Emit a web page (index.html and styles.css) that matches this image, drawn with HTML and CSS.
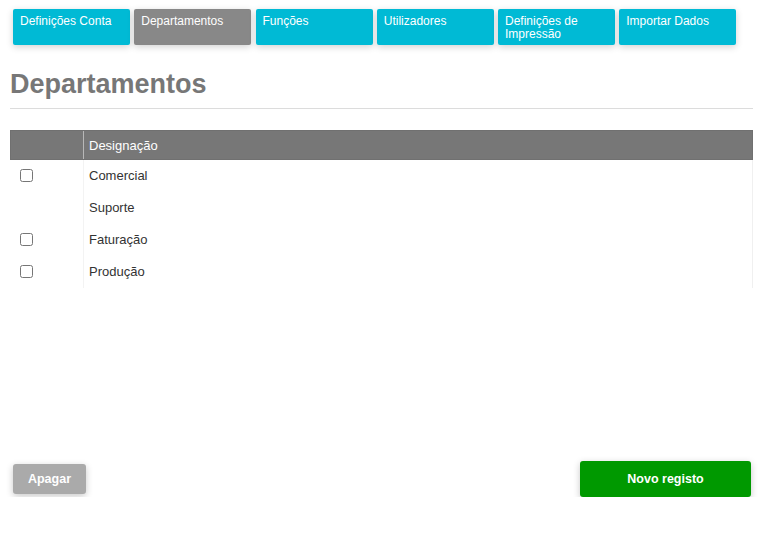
FILE: index.html
```html
<!DOCTYPE html>
<html lang="pt">
<head>
<meta charset="utf-8">
<title>Departamentos</title>
<link rel="stylesheet" href="styles.css">
</head>
<body>
<div class="page">
  <nav class="tabs">
    <a class="tab">Definições Conta</a>
    <a class="tab active">Departamentos</a>
    <a class="tab">Funções</a>
    <a class="tab">Utilizadores</a>
    <a class="tab">Definições de Impressão</a>
    <a class="tab">Importar Dados</a>
  </nav>

  <h1 class="title">Departamentos</h1>

  <table class="grid">
    <thead>
      <tr><th class="sel"></th><th class="name">Designação</th></tr>
    </thead>
    <tbody>
      <tr><td class="sel"><input type="checkbox"></td><td class="name">Comercial</td></tr>
      <tr><td class="sel"></td><td class="name">Suporte</td></tr>
      <tr><td class="sel"><input type="checkbox"></td><td class="name">Faturação</td></tr>
      <tr><td class="sel"><input type="checkbox"></td><td class="name">Produção</td></tr>
    </tbody>
  </table>

  <div class="actions">
    <button class="btn btn-delete">Apagar</button>
    <button class="btn btn-new">Novo registo</button>
  </div>
</div>
</body>
</html>
```

FILE: styles.css
```css
html, body {
  margin: 0;
  padding: 0;
  background: #fff;
}

.page {
  padding: 9px 10px 0 10px;
  font-family: "Liberation Sans", Arial, sans-serif;
}

.tabs {
  display: flex;
  gap: 4.25px;
  padding-left: 3px;
}

.tab {
  box-sizing: border-box;
  width: 117px;
  height: 36px;
  padding: 6px 7px 5px 7px;
  background: #00bad5;
  color: #fff;
  font-size: 12px;
  line-height: 13px;
  border-radius: 2px;
  box-shadow: 0 2px 7px rgba(0, 0, 0, 0.18);
}

.tab.active {
  background: #888;
}

.title {
  margin: 23px 0 0 0;
  padding-bottom: 8px;
  border-bottom: 1px solid #dcdcdc;
  font-size: 27px;
  line-height: 32px;
  font-weight: bold;
  color: #777;
}

.grid {
  margin-top: 21px;
  width: 100%;
  border-collapse: collapse;
  font-size: 13px;
}

.grid th {
  height: 28px;
  padding: 0 5px;
  background: #777;
  color: #fff;
  font-weight: normal;
  text-align: left;
  border-top: 1px solid #707070;
  border-bottom: 1px solid #707070;
}

.grid th.sel {
  width: 72px;
  padding: 0;
  border-left: 1px solid #707070;
}

.grid th.name {
  border-left: 1px solid #b8b8b8;
  border-right: 1px solid #707070;
}

.grid tbody tr {
  height: 32px;
}

.grid td {
  padding: 0 5px;
  color: #333;
}

.grid td.sel {
  padding: 9px 0 0 9px;
  vertical-align: top;
}

.grid td.name {
  border-left: 1px solid #f3f3f3;
  border-right: 1px solid #f0f0f0;
  vertical-align: middle;
}

.grid input[type="checkbox"] {
  width: 13px;
  height: 13px;
  margin: 0;
  display: block;
}

.actions {
  margin-top: 173px;
  display: flex;
  justify-content: space-between;
  align-items: center;
}

.btn {
  border: none;
  color: #fff;
  font-family: "Liberation Sans", Arial, sans-serif;
  font-weight: bold;
  font-size: 12.5px;
  border-radius: 3px;
  cursor: pointer;
}

.btn-delete {
  margin-left: 3px;
  height: 30px;
  width: 73px;
  background: #aaa;
  box-shadow: 0 2px 7px rgba(0, 0, 0, 0.22);
}

.btn-new {
  margin-right: 2px;
  height: 36px;
  width: 171px;
  background: #009900;
  box-shadow: 0 2px 7px rgba(0, 0, 0, 0.22);
}
```
